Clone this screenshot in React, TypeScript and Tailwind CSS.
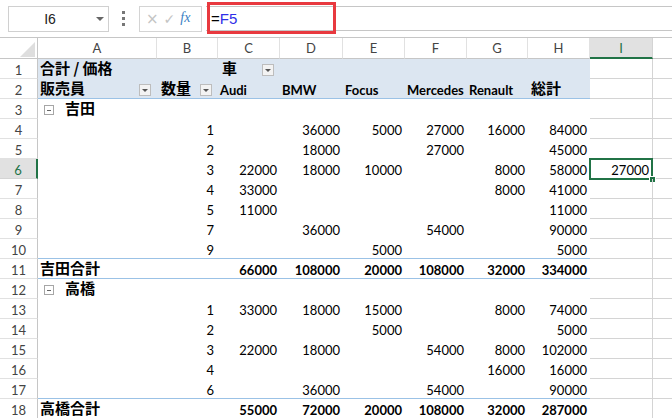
import React from 'react';

type Row = (string | null)[];

const yoshida: Row[] = [
  ['1', null, '36000', '5000', '27000', '16000', '84000'],
  ['2', null, '18000', null, '27000', null, '45000'],
  ['3', '22000', '18000', '10000', null, '8000', '58000'],
  ['4', '33000', null, null, null, '8000', '41000'],
  ['5', '11000', null, null, null, null, '11000'],
  ['7', null, '36000', null, '54000', null, '90000'],
  ['9', null, null, '5000', null, null, '5000'],
];
const yTotal = ['66000', '108000', '20000', '108000', '32000', '334000'];
const takahashi: Row[] = [
  ['1', '33000', '18000', '15000', null, '8000', '74000'],
  ['2', null, null, '5000', null, null, '5000'],
  ['3', '22000', '18000', null, '54000', '8000', '102000'],
  ['4', null, null, null, null, '16000', '16000'],
  ['6', null, '36000', null, '54000', null, '90000'],
];
const tTotal = ['55000', '72000', '20000', '108000', '32000', '287000'];

function Btn() {
  return (
    <span className="w-[12px] h-[12px] mb-[2px] border border-[#bdbdbd] bg-[#f3f3f3] flex items-center justify-center shrink-0">
      <span className="w-0 h-0 border-l-[3px] border-r-[3px] border-t-[3px] border-l-transparent border-r-transparent border-t-[#555]" />
    </span>
  );
}

function Collapse() {
  return (
    <span className="w-[10px] h-[10px] mb-[3px] ml-[4px] border border-[#a6a6a6] bg-white flex items-center justify-center shrink-0">
      <span className="w-[4px] h-[1px] bg-[#666]" />
    </span>
  );
}

function Cjk({ children, className = '' }: { children: React.ReactNode; className?: string }) {
  return (
    <span className={"font-['Noto_Sans_CJK_JP',sans-serif] text-[15px] font-bold leading-[16px] pb-[2px] " + className}>
      {children}
    </span>
  );
}

const blueRows = [2, 10, 11, 17];

type Align = 'left' | 'right' | 'between';

function PCell({ r, align = 'left', children }: { r: number; align?: Align; children?: React.ReactNode }) {
  const border = blueRows.includes(r) ? 'border-[#9bc2e6]' : 'border-transparent';
  const bg = r <= 2 ? 'bg-[#dce6f1]' : 'bg-white';
  const al =
    align === 'right'
      ? 'justify-end pr-[3px]'
      : align === 'between'
      ? 'justify-between pl-[2px] pr-[6px]'
      : 'justify-start pl-[2px]';
  return (
    <div className={`h-[20px] border-b ${border} ${bg} ${al} flex items-end leading-[16px] whitespace-nowrap text-black`}>
      {children}
    </div>
  );
}

export default function App() {
  const grid: React.ReactNode[] = [];
  const colLetters = ['A', 'B', 'C', 'D', 'E', 'F', 'G', 'H', 'I'];

  grid.push(
    <div key="corner" className="h-[21px] border-b border-r border-[#c6c6c6] flex items-end justify-end pr-[2px] pb-[1px]">
      <svg width="15" height="15" viewBox="0 0 15 15">
        <polygon points="15,0 15,15 0,15" fill="#dedede" />
      </svg>
    </div>
  );
  colLetters.forEach((c) => {
    const sel = c === 'I';
    grid.push(
      <div
        key={'h' + c}
        className={
          sel
            ? 'h-[21px] border-b-2 border-b-[#217346] border-r border-r-[#d4d4d4] bg-[#e1e1e1] flex items-end justify-center leading-[16px] pb-[1px] text-[13px] text-[#217346]'
            : 'h-[21px] border-b border-b-[#c6c6c6] border-r border-r-[#e1e1e1] flex items-end justify-center leading-[16px] pb-[2px] text-[13px] text-[#444]'
        }
      >
        {c}
      </div>
    );
  });
  grid.push(<div key="hJ" className="h-[21px] border-b border-[#c6c6c6]" />);

  const dataMap: Record<number, Row> = {};
  yoshida.forEach((d, i) => (dataMap[4 + i] = d));
  takahashi.forEach((d, i) => (dataMap[13 + i] = d));

  for (let r = 1; r <= 18; r++) {
    const selRow = r === 6;
    grid.push(
      <div
        key={'r' + r}
        className={
          selRow
            ? 'h-[20px] border-b border-b-[#d4d4d4] border-r-2 border-r-[#217346] bg-[#e1e1e1] flex items-end justify-center leading-[16px] text-[13px] text-[#217346]'
            : 'h-[20px] border-b border-b-[#e1e1e1] border-r border-r-[#c6c6c6] flex items-end justify-center leading-[16px] text-[13px] text-[#444]'
        }
      >
        {r}
      </div>
    );

    const cells: React.ReactNode[] = [];
    if (r === 1) {
      cells.push(<PCell key="a" r={r}><Cjk>合計 / 価格</Cjk></PCell>);
      cells.push(<PCell key="b" r={r} />);
      cells.push(
        <PCell key="c" r={r} align="between">
          <Cjk className="ml-[2px]">車</Cjk>
          <Btn />
        </PCell>
      );
      for (let k = 0; k < 5; k++) cells.push(<PCell key={'x' + k} r={r} />);
    } else if (r === 2) {
      cells.push(
        <PCell key="a" r={r} align="between">
          <Cjk>販売員</Cjk>
          <Btn />
        </PCell>
      );
      cells.push(
        <PCell key="b" r={r} align="between">
          <Cjk className="ml-[2px]">数量</Cjk>
          <Btn />
        </PCell>
      );
      ['Audi', 'BMW', 'Focus', 'Mercedes', 'Renault'].forEach((t) =>
        cells.push(
          <PCell key={t} r={r}>
            <span className="text-[13px] font-bold">{t}</span>
          </PCell>
        )
      );
      cells.push(
        <PCell key="h" r={r}>
          <Cjk className="ml-[1px]">総計</Cjk>
        </PCell>
      );
    } else if (r === 3 || r === 12) {
      cells.push(
        <PCell key="a" r={r}>
          <Collapse />
          <Cjk className="ml-[11px]">{r === 3 ? '吉田' : '高橋'}</Cjk>
        </PCell>
      );
      for (let k = 0; k < 7; k++) cells.push(<PCell key={'x' + k} r={r} />);
    } else if (r === 11 || r === 18) {
      cells.push(
        <PCell key="a" r={r}>
          <Cjk>{r === 11 ? '吉田合計' : '高橋合計'}</Cjk>
        </PCell>
      );
      cells.push(<PCell key="b" r={r} />);
      (r === 11 ? yTotal : tTotal).forEach((v, k) =>
        cells.push(
          <PCell key={'t' + k} r={r} align="right">
            <span className="text-[13px] font-bold">{v}</span>
          </PCell>
        )
      );
    } else {
      cells.push(<PCell key="a" r={r} />);
      const d = dataMap[r];
      d.forEach((v, k) =>
        cells.push(
          <PCell key={'d' + k} r={r} align="right">
            {v ? <span className={k === 0 ? 'text-[13px] mr-[1px]' : 'text-[13px]'}>{v}</span> : null}
          </PCell>
        )
      );
    }
    grid.push(...cells);

    grid.push(
      <div
        key={'i' + r}
        className="relative h-[20px] border-b border-r border-[#d4d4d4] flex items-end justify-end pr-[3px] leading-[16px] text-[13px] text-black"
      >
        {selRow ? (
          <>
            <span>27000</span>
            <div className="absolute left-[-1px] top-[-1px] right-[-1px] bottom-[-2px] border-2 border-[#217346]" />
            <div className="absolute right-[-4px] bottom-[-5px] w-[7px] h-[7px] bg-[#217346] border border-white" />
          </>
        ) : null}
      </div>
    );
    grid.push(<div key={'j' + r} className="h-[20px] border-b border-[#d4d4d4]" />);
  }

  return (
    <div className="w-[672px] h-[418px] overflow-hidden bg-white relative font-['Lato','Noto_Sans_CJK_JP',sans-serif]">
      <div className="h-[38px] border-b border-[#c6c6c6] flex items-start relative">
        <div className="ml-[8px] mt-[6px] w-[101px] h-[26px] border border-[#d0d0d0] flex items-center">
          <span className="w-[82px] text-center text-[14px] text-[#222] font-['Liberation_Sans',sans-serif]">I6</span>
          <span className="ml-[5px] w-0 h-0 border-l-[4px] border-r-[4px] border-t-[4px] border-l-transparent border-r-transparent border-t-[#666]" />
        </div>
        <div className="ml-[13px] mt-[11px] flex flex-col gap-[3px]">
          <span className="w-[3px] h-[3px] bg-[#777]" />
          <span className="w-[3px] h-[3px] bg-[#777]" />
          <span className="w-[3px] h-[3px] bg-[#777]" />
        </div>
        <div className="ml-[14px] mt-[6px] w-[63px] h-[26px] border border-[#d4d4d4] flex items-center">
          <span className="ml-[6px] text-[#c4c4c4] text-[15px] leading-none font-['DejaVu_Sans',sans-serif]">×</span>
          <span className="ml-[5px] text-[#c4c4c4] text-[14px] leading-none font-['DejaVu_Sans',sans-serif]">✓</span>
          <span className="ml-[5px] -mt-[3px] text-[#3b7fc4] text-[14px] italic leading-none font-['Liberation_Serif',serif]">fx</span>
        </div>
        <div className="ml-[4px] mt-[6px] flex-1 h-[25px] border-y border-[#c6c6c6] flex items-center">
          <span className="ml-[5px] text-[15px] font-['Liberation_Sans',sans-serif] leading-none">
            <span className="text-black">=</span>
            <span className="text-[#2f2fe8]">F5</span>
          </span>
        </div>
        <div className="absolute left-[207px] top-[2px] w-[129px] h-[32px] border-[3px] border-[#e8393f]" />
      </div>

      <div className="grid grid-cols-[38px_119px_61px_62px_63px_62px_62px_61px_62px_63px_1fr]">
        {grid}
      </div>
    </div>
  );
}
